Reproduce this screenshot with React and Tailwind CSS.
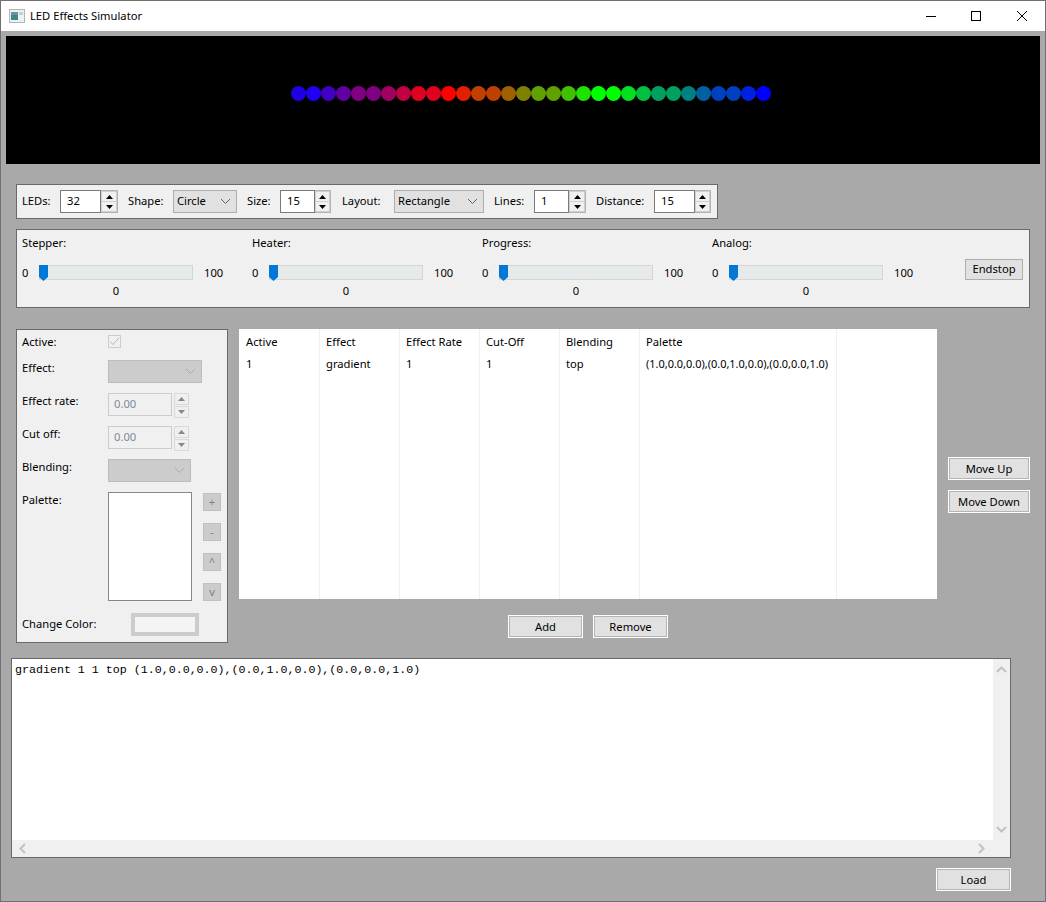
import React from "react";

const ledColors = [
  "#2000e0", "#2000f0", "#4000c0", "#6000a0", "#800080", "#800080", "#a00060", "#c00040",
  "#e00020", "#e00020", "#ff0000", "#e02000", "#c04000", "#c04000", "#a06000", "#808000",
  "#60a000", "#60a000", "#40c000", "#20e000", "#00ff00", "#00ff00", "#00e020", "#00c040",
  "#00a060", "#00a060", "#008080", "#0060a0", "#0040c0", "#0040c0", "#0020e0", "#0000ff",
];

const sliders = ["Stepper:", "Heater:", "Progress:", "Analog:"];
const columns = ["Active", "Effect", "Effect Rate", "Cut-Off", "Blending", "Palette"];
const row = ["1", "gradient", "1", "1", "top", "(1.0,0.0,0.0),(0.0,1.0,0.0),(0.0,0.0,1.0)"];

const Chevron = ({ className = "", color = "#606060", rotate = 0, weight = 1 }) => (
  <svg width="11" height="7" viewBox="0 0 11 7" className={className} style={{ transform: `rotate(${rotate}deg)` }}>
    <path d="M1 1l4.5 4.5L10 1" fill="none" stroke={color} strokeWidth={weight} />
  </svg>
);

const Triangle = ({ down = false, color = "#000" }) => (
  <svg width="7" height="4" viewBox="0 0 7 4">
    <path d={down ? "M0 0h7L3.5 4z" : "M3.5 0L7 4H0z"} fill={color} />
  </svg>
);

const Spin = ({ value, inputWidth, width }) => (
  <div className="flex h-[23px] shrink-0" style={{ width }}>
    <div className="h-full border border-[#7a7a7a] bg-white pl-[6px] leading-[20px]" style={{ width: inputWidth }}>
      {value}
    </div>
    <div className="flex h-full flex-1 flex-col gap-[1px] border border-l-0 border-[#b4b4b4] bg-[#cfcfcf] p-[1px]">
      <div className="flex flex-1 items-center justify-center bg-[#f0f0f0]">
        <Triangle />
      </div>
      <div className="flex flex-1 items-center justify-center bg-[#f0f0f0]">
        <Triangle down />
      </div>
    </div>
  </div>
);

const Combo = ({ value, width }) => (
  <div
    className="flex h-[23px] shrink-0 items-center justify-between border border-[#adadad] bg-[#e1e1e1] pl-[3px] pr-[5px]"
    style={{ width }}
  >
    <span>{value}</span>
    <Chevron />
  </div>
);

const Label = ({ text, width }) => (
  <div className="shrink-0 pb-[1px]" style={{ width }}>
    {text}
  </div>
);

const Button = ({ text, className = "" }) => (
  <button
    type="button"
    className={`flex h-[23px] items-center justify-center border border-white bg-[#e1e1e1] pt-[1px] outline outline-1 -outline-offset-2 outline-[#b5b5b5] ${className}`}
  >
    {text}
  </button>
);

const Slider = ({ label }) => (
  <div className="w-[230px] shrink-0">
    <div className="h-4 leading-4">{label}</div>
    <div className="mt-[14px] flex h-[16px] items-start">
      <span className="w-[17px] leading-[15px]">0</span>
      <div className="relative h-[15px] w-[154px] border border-[#d6d6d6] bg-[#e7eaea]">
        <svg width="9" height="16" viewBox="0 0 9 16" className="absolute -left-px -top-px">
          <path d="M0 0h9v12l-4.5 4L0 12z" fill="#0078d7" />
        </svg>
      </div>
      <span className="ml-[11px] leading-[15px]">100</span>
    </div>
    <div className="mt-[2px] w-[188px] text-center leading-4">0</div>
  </div>
);

const DisabledSpinner = () => (
  <div className="ml-[2px] flex h-[25px] w-[15px] flex-col gap-[1px]">
    <div className="flex flex-1 items-center justify-center border border-[#d9d9d9] bg-[#efefef]">
      <Triangle color="#888" />
    </div>
    <div className="flex flex-1 items-center justify-center border border-[#d9d9d9] bg-[#efefef]">
      <Triangle color="#888" down />
    </div>
  </div>
);

const DisabledNumber = () => (
  <div className="flex">
    <div className="h-[23px] w-[64px] border border-[#cccccc] bg-[#f0f0f0] pl-[5px] leading-[19px] text-[#7e8a96]">
      0.00
    </div>
    <DisabledSpinner />
  </div>
);

const DisabledCombo = ({ width }) => (
  <div
    className="flex h-[23px] items-center justify-end border border-[#bcbcbc] bg-[#cccccc] pr-[5px]"
    style={{ width }}
  >
    <Chevron color="#a8a8a8" />
  </div>
);

const PaletteButton = ({ text }) => (
  <div className="flex h-[18px] w-[18px] items-center justify-center border border-[#bfbfbf] bg-[#cccccc] leading-none text-[#808080]">
    {text}
  </div>
);

const EffectForm = () => (
  <div className="h-[314px] w-[212px] shrink-0 border border-[#696969] bg-[#f0f0f0] pl-[5px]">
    <div className="mt-[5px] flex h-[13px] items-start leading-[14px]">
      <Label text="Active:" width={86} />
      <div className="flex h-[13px] w-[13px] items-center justify-center border border-[#cccccc] bg-[#f0f0f0]">
        <svg width="11" height="9" viewBox="0 0 11 9">
          <path d="M1 4.5L4 7.5 10 1" fill="none" stroke="#b5b5b5" strokeWidth="1" />
        </svg>
      </div>
    </div>
    <div className="mt-[12px] flex h-[23px] items-start leading-4">
      <Label text="Effect:" width={86} />
      <DisabledCombo width={94} />
    </div>
    <div className="mt-[10px] flex h-[23px] items-start leading-4">
      <Label text="Effect rate:" width={86} />
      <DisabledNumber />
    </div>
    <div className="mt-[10px] flex h-[23px] items-start leading-4">
      <Label text="Cut off:" width={86} />
      <DisabledNumber />
    </div>
    <div className="mt-[10px] flex h-[23px] items-start leading-4">
      <Label text="Blending:" width={86} />
      <DisabledCombo width={83} />
    </div>
    <div className="mt-[10px] flex h-[109px] items-start leading-4">
      <Label text="Palette:" width={86} />
      <div className="h-full w-[84px] border border-[#828790] bg-white" />
      <div className="ml-[11px] mt-[1px] flex h-[108px] flex-col justify-between">
        <PaletteButton text="+" />
        <PaletteButton text="-" />
        <PaletteButton text="^" />
        <PaletteButton text="v" />
      </div>
    </div>
    <div className="mt-[12px] flex h-[23px] items-start leading-[22px]">
      <Label text="Change Color:" width={109} />
      <div className="h-[23px] w-[68px] border-[4px] border-[#cccccc] bg-[#f4f4f4]" />
    </div>
  </div>
);

const EffectTable = () => (
  <table className="h-[270px] w-[698px] table-fixed bg-white">
    <colgroup>
      <col className="w-[80px]" />
      <col className="w-[80px]" />
      <col className="w-[80px]" />
      <col className="w-[80px]" />
      <col className="w-[80px]" />
      <col className="w-[197px]" />
      <col />
    </colgroup>
    <thead>
      <tr className="h-[25px]">
        {columns.map((c, i) => (
          <th
            key={c}
            className={`border-r border-[#f0f0f0] pt-[1px] text-left font-normal ${i === 0 ? "pl-[7px]" : "pl-[6.5px]"}`}
          >
            {c}
          </th>
        ))}
        <th />
      </tr>
    </thead>
    <tbody>
      <tr className="h-[20px]">
        {row.map((c, i) => (
          <td
            key={i}
            className={`whitespace-nowrap border-r border-[#f0f0f0] ${i === 0 ? "pl-[7px]" : "pl-[6.5px]"} ${i === 5 ? "text-[10.95px]" : ""}`}
          >
            {c}
          </td>
        ))}
        <td />
      </tr>
      <tr>
        {row.map((_, i) => (
          <td key={i} className="border-r border-[#f0f0f0]" />
        ))}
        <td />
      </tr>
    </tbody>
  </table>
);

const LogBox = () => (
  <div className="ml-[10px] mt-[15px] flex h-[200px] w-[1000px] flex-col border border-[#696969] bg-white">
    <div className="flex min-h-0 flex-1">
      <div className="flex-1 pl-[3px] pt-[3px] font-['Liberation_Mono',monospace] text-[11.65px] leading-[16px]">
        gradient 1 1 top (1.0,0.0,0.0),(0.0,1.0,0.0),(0.0,0.0,1.0)
      </div>
      <div className="flex w-[17px] flex-col items-center justify-between bg-[#f0f0f0] py-[7px]">
        <Chevron color="#c2c2c2" rotate={180} weight={2} />
        <Chevron color="#c2c2c2" weight={2} />
      </div>
    </div>
    <div className="flex h-[17px] items-center justify-between bg-[#f0f0f0] pl-[5px] pr-[23px]">
      <Chevron color="#c2c2c2" rotate={90} weight={2} />
      <Chevron color="#c2c2c2" rotate={-90} weight={2} />
    </div>
  </div>
);

const App = () => {
  return (
    <div className="flex h-[902px] w-[1046px] flex-col overflow-hidden border border-[#707070] bg-[#a9a9a9] font-['Noto_Sans',sans-serif] text-[11.2px] text-black">
      <div className="flex h-[30px] shrink-0 items-center bg-white">
        <svg width="16" height="14" viewBox="0 0 16 14" className="ml-[8px]">
          <rect x="0.5" y="0.5" width="15" height="13" fill="#eef1f2" stroke="#b4b4b4" />
          <rect x="2" y="3" width="7" height="8" fill="#3d8a80" />
          <rect x="2" y="3" width="7" height="3" fill="#6f8fa6" />
          <rect x="10" y="3" width="4" height="3" fill="#c4d2d8" />
        </svg>
        <span className="ml-[5px]">LED Effects Simulator</span>
        <div className="ml-auto mr-[18px] flex items-center gap-[35px]">
          <svg width="10" height="10" viewBox="0 0 10 10">
            <path d="M0 5.5h10" stroke="#000" />
          </svg>
          <svg width="10" height="10" viewBox="0 0 10 10">
            <rect x="0.5" y="0.5" width="9" height="9" fill="none" stroke="#000" />
          </svg>
          <svg width="10" height="10" viewBox="0 0 10 10" className="ml-[1px]">
            <path d="M0 0l10 10M10 0L0 10" stroke="#000" />
          </svg>
        </div>
      </div>

      <div className="ml-[5px] mt-[5px] flex h-[128px] w-[1034px] shrink-0 items-start bg-black pl-[285px] pt-[50px]">
        {ledColors.map((color, i) => (
          <div key={i} className="h-[15px] w-[15px] rounded-full" style={{ backgroundColor: color }} />
        ))}
      </div>

      <div className="ml-[15px] mt-[20px] flex h-[35px] w-[702px] shrink-0 items-center border border-[#696969] bg-[#f0f0f0] pl-[5px]">
        <Label text="LEDs:" width={38} />
        <Spin value="32" inputWidth={41} width={58} />
        <Label text="" width={10} />
        <Label text="Shape:" width={45} />
        <Combo value="Circle" width={64} />
        <Label text="" width={10} />
        <Label text="Size:" width={33} />
        <Spin value="15" inputWidth={35} width={51} />
        <Label text="" width={11} />
        <Label text="Layout:" width={52} />
        <Combo value="Rectangle" width={90} />
        <Label text="" width={10} />
        <Label text="Lines:" width={40} />
        <Spin value="1" inputWidth={35} width={52} />
        <Label text="" width={10} />
        <Label text="Distance:" width={58} />
        <Spin value="15" inputWidth={41} width={57} />
      </div>

      <div className="ml-[15px] mt-[10px] flex h-[79px] w-[1014px] shrink-0 items-start border border-[#696969] bg-[#f0f0f0] pl-[5px] pt-[5px]">
        {sliders.map((s) => (
          <Slider key={s} label={s} />
        ))}
        <button
          type="button"
          className="ml-[23px] mt-[24px] flex h-[21px] w-[58px] shrink-0 items-center justify-center border border-[#adadad] bg-[#e1e1e1]"
        >
          Endstop
        </button>
      </div>

      <div className="ml-[15px] mt-[21px] flex shrink-0 items-start">
        <EffectForm />
        <div className="ml-[11px] flex flex-col">
          <EffectTable />
          <div className="mt-[16px] flex justify-center gap-[10px]">
            <Button text="Add" className="w-[75px]" />
            <Button text="Remove" className="w-[75px]" />
          </div>
        </div>
        <div className="ml-[11px] mt-[128px] flex flex-col gap-[10px]">
          <Button text="Move Up" className="w-[82px]" />
          <Button text="Move Down" className="w-[82px]" />
        </div>
      </div>

      <LogBox />

      <div className="ml-[935px] mt-[10px]">
        <Button text="Load" className="w-[75px]" />
      </div>
    </div>
  );
};

export default App;
